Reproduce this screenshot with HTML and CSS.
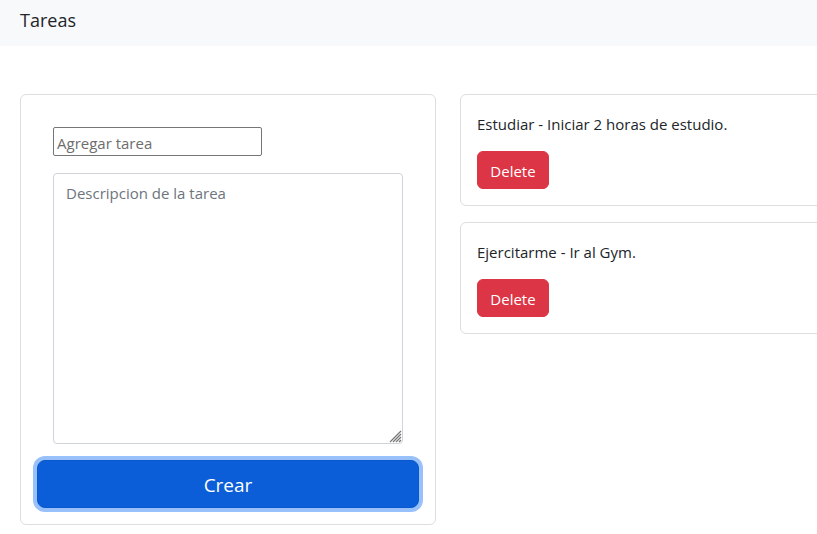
FILE: index.html
```html
<!DOCTYPE html>
<html lang="es">
<head>
<meta charset="utf-8">
<title>Tareas</title>
<link rel="stylesheet" href="styles.css">
</head>
<body>
<nav class="navbar">
  <span class="brand">Tareas</span>
</nav>
<main class="layout">
  <section class="col">
    <div class="card">
      <div class="card-body">
        <form class="form">
          <input class="plain-input" type="text" placeholder="Agregar tarea">
          <textarea class="textarea" placeholder="Descripcion de la tarea"></textarea>
        </form>
        <button class="btn-crear" type="button">Crear</button>
      </div>
    </div>
  </section>
  <section class="col list">
    <div class="card">
      <div class="card-body">
        <p class="task">Estudiar - Iniciar 2 horas de estudio.</p>
        <button class="btn-delete" type="button">Delete</button>
      </div>
    </div>
    <div class="card">
      <div class="card-body">
        <p class="task">Ejercitarme - Ir al Gym.</p>
        <button class="btn-delete" type="button">Delete</button>
      </div>
    </div>
  </section>
</main>
</body>
</html>
```

FILE: styles.css
```css
* { box-sizing: border-box; }
html, body { margin: 0; padding: 0; }
body {
  font-family: "Open Sans", "Noto Sans", sans-serif;
  font-size: 15px;
  line-height: 24px;
  color: #212529;
  background: #fff;
  overflow: hidden;
  width: 817px;
  height: 534px;
}
.navbar {
  height: 46px;
  background: #f8f9fa;
  padding: 8px 20px 0;
}
.brand {
  font-size: 18px;
  line-height: 24px;
  color: #212529;
}
.layout {
  display: flex;
  gap: 24px;
  padding: 48px 0 0 20px;
  align-items: flex-start;
}
.col {
  flex: 0 0 416px;
  width: 416px;
}
.list {
  display: flex;
  flex-direction: column;
  gap: 16px;
}
.card {
  border: 1px solid #dcdee0;
  border-radius: 6px;
  background: #fff;
}
.card-body {
  padding: 16px;
}
.form {
  display: flex;
  flex-direction: column;
  align-items: flex-start;
  gap: 17px;
  padding: 16px;
}
.plain-input {
  width: 209px;
  height: 29px;
  border: 1px solid #767676;
  border-radius: 2px;
  padding: 2px 3px 0;
  font-family: inherit;
  font-size: 15px;
  color: #212529;
}
.plain-input::placeholder { color: #6d6d6d; }
.textarea {
  width: 350px;
  height: 271px;
  border: 1px solid #ced4da;
  border-radius: 4px;
  padding: 7px 12px 5px;
  font-family: inherit;
  font-size: 15px;
  line-height: 24px;
  color: #212529;
  resize: both;
}
.textarea::placeholder { color: #6c757d; }
.textarea::-webkit-resizer {
  background: url("data:image/svg+xml;utf8,<svg xmlns='http://www.w3.org/2000/svg' width='14' height='14' viewBox='0 0 14 14'><g stroke='%23777' stroke-width='1.2'><line x1='13' y1='2' x2='2' y2='13'/><line x1='13' y1='5' x2='5' y2='13'/><line x1='13' y1='8' x2='8' y2='13'/><line x1='13' y1='11' x2='11' y2='13'/></g></svg>") no-repeat right bottom;
}
.btn-crear {
  display: block;
  width: 100%;
  height: 48px;
  margin-top: 0;
  padding: 1px 0 0;
  background: #0b5ed7;
  color: #fff;
  border: 1px solid #0a58ca;
  border-radius: 8px;
  box-shadow: 0 0 0 4px #98c1fb;
  font-family: inherit;
  font-size: 19px;
  line-height: 30px;
}
.task {
  margin: 0 0 16px;
  padding-top: 1px;
  height: 24px;
}
.btn-delete {
  display: block;
  width: 72px;
  height: 38px;
  padding: 1px 0 0;
  background: #dc3545;
  border: 1px solid #dc3545;
  border-radius: 6px;
  color: #fff;
  font-family: inherit;
  font-size: 15px;
  line-height: 24px;
}
```
